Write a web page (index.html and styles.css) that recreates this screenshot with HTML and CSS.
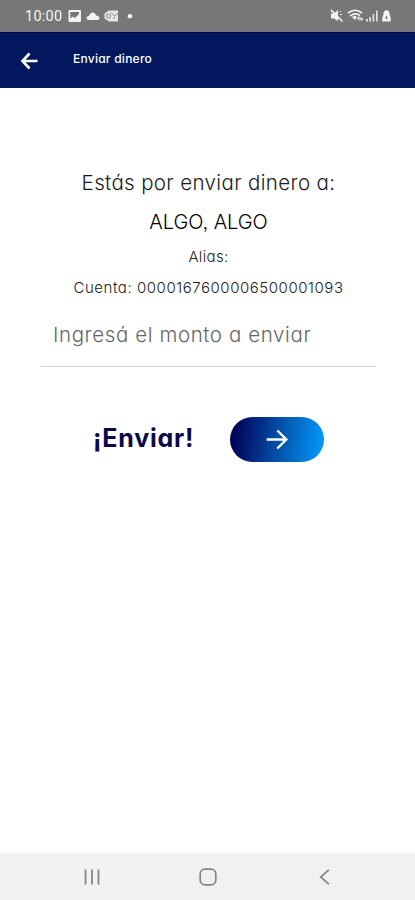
FILE: index.html
```html
<!DOCTYPE html>
<html lang="es">
<head>
<meta charset="utf-8">
<meta name="viewport" content="width=device-width, initial-scale=1">
<title>Enviar dinero</title>
<link rel="stylesheet" href="styles.css">
</head>
<body>
<div class="phone">
  <div class="status">
    <span class="clock">10:00</span>
    <svg class="notices" width="70" height="14" viewBox="0 0 70 14" fill="#f2f2f2">
      <path fill-rule="evenodd" d="M2.500 1H13Q14 1 14 2V12Q14 13 13 13H2.500Q1.500 13 1.500 12V2Q1.500 1 2.500 1ZM3.300 3V9.500L6 7.500L8 9L12 5V3Z"/>
      <path d="M22 11Q19.500 11 19.500 9Q19.500 7.200 22 7Q23.500 3 26.500 3.500Q28.500 4 29 6.500Q32.500 7 32.500 9.300Q32.500 11 30.500 11Z"/>
      <path d="M42 1.500H51V12.500H42L37.500 9.500V4.500Z" opacity=".9"/>
      <circle cx="41.500" cy="7" r="2" fill="none" stroke="#858585"/>
      <path d="M44 3.500L47.500 7L51 4.500M46 10L48 8" fill="none" stroke="#858585"/>
      <circle cx="63" cy="7.200" r="2.300"/>
    </svg>
    <svg class="signals" width="64" height="16" viewBox="0 0 64 16" fill="#f2f2f2">
      <path d="M2 5.500H5L9 2V13L5 10.500H2Z"/>
      <path d="M2 2L13.500 13.500" fill="none" stroke="#f2f2f2" stroke-width="1.700"/>
      <path d="M10.500 4L12 3M11 6.500H13"  stroke="#f2f2f2"/>
      <path d="M19 5Q26 -.5 33 5M21 8Q26 4 31 7.500" fill="none" stroke="#f2f2f2" stroke-width="1.600"/>
      <path d="M23 9Q25.500 7 28 9L26 12ZM28 10L30.500 8V13ZM31 9L34.500 11L32 13Z"/>
      <path d="M37 11H39V13.500H37ZM40.300 9H42V13.500H40.300ZM43.600 6H45.200V13.500H43.600ZM47 2.500H48.700V13.500H47Z" opacity=".85"/>
      <path fill-rule="evenodd" d="M55.500 3H56.500V2H58.500V3H59.500Q61 4 60.500 7Q62 8 61.800 13.500H53.200Q53 8 54.500 7Q54 4 55.500 3ZM57 8V9.500H56L57.500 11.500L59 9.500H58V8Z"/>
    </svg>
  </div>
  <header class="appbar">
    <svg width="18" height="18" viewBox="0 0 18 18" fill="none" stroke="#fff" stroke-width="2.600"><path d="M17.500 9H3M9.500 1.500L2.500 9L9.500 16.500"/></svg>
    <h1>Enviar dinero</h1>
  </header>
  <main class="content">
    <p class="lead">Estás por enviar dinero a:</p>
    <p class="name">ALGO, ALGO</p>
    <p class="alias">Alias:</p>
    <p class="account">Cuenta: 0000167600006500001093</p>
    <div class="amount"><span>Ingresá el monto a enviar</span></div>
    <div class="action">
      <span class="label">¡Enviar!</span>
      <button class="send" aria-label="Enviar">
        <svg width="22" height="22" viewBox="0 0 22 22" fill="none" stroke="#fff" stroke-width="2.400"><path d="M.7 10.500H20M11.300 1.500L20.300 10.500L11.300 19.500"/></svg>
      </button>
    </div>
  </main>
  <nav class="navbar">
    <svg width="18" height="18" viewBox="0 0 18 18" stroke="#858585" stroke-width="1.800"><path d="M2.500 1.500V16.500M9 1.500V16.500M15.500 1.500V16.500"/></svg>
    <svg width="18" height="18" viewBox="0 0 18 18" fill="none" stroke="#858585" stroke-width="1.700"><rect x="1.200" y="1.200" width="15.600" height="15.600" rx="4.800"/></svg>
    <svg width="18" height="18" viewBox="0 0 18 18" fill="none" stroke="#858585" stroke-width="1.700"><path d="M13.800 1.800L5.700 9L13.800 16.200"/></svg>
  </nav>
</div>
</body>
</html>
```
FILE: styles.css
```css
* { box-sizing: border-box; }
body {
  margin: 0;
  background: #fff;
  font-family: Inter, "Open Sans", sans-serif;
  font-feature-settings: "cv11", "ss03";
}
p, h1 { margin: 0; white-space: nowrap; }
svg { display: block; flex: none; }
.phone { display: flex; flex-direction: column; height: 900px; }
.status {
  display: flex;
  align-items: center;
  height: 32px;
  padding: 0 22px 0 25px;
  background: #777;
}
.clock {
  width: 42px;
  padding-top: 1px;
  font: 14.5px/32px Roboto, sans-serif;
  letter-spacing: .25px;
  color: #f5f5f5;
}
.signals { margin-left: auto; }
.appbar {
  display: flex;
  align-items: center;
  height: 56px;
  padding: 1px 20px 0;
  background: #02175e;
  border-top: 1px solid #020052;
  color: #fff;
}
.appbar h1 {
  margin: -5px 0 0 35px;
  font-size: 12px;
  line-height: 20px;
  font-weight: 500;
  letter-spacing: .25px;
}
.content {
  flex: 1;
  display: flex;
  flex-direction: column;
  align-items: center;
  padding: 79px 39px 0 41px;
}
.lead { font-size: 20.5px; line-height: 32px; font-weight: 300; color: #1a1a1a; letter-spacing: .36px; }
.name { margin-top: 7px; font-size: 20px; line-height: 32px; font-weight: 300; color: #000; letter-spacing: -.05px; }
.alias { margin-top: 7px; font-size: 15px; line-height: 24px; font-weight: 300; color: #222; letter-spacing: .35px; }
.account { margin-top: 7px; font-size: 15px; line-height: 24px; font-weight: 300; color: #222; letter-spacing: .55px; }
.amount {
  align-self: stretch;
  height: 67px;
  padding: 19px 0 0 12px;
  border-bottom: 1px solid #d4d4d4;
  font-size: 20.5px;
  line-height: 32px;
  font-weight: 300;
  letter-spacing: .6px;
  color: #666;
  white-space: nowrap;
}
.action {
  align-self: stretch;
  display: flex;
  align-items: center;
  margin-top: 50px;
  padding-left: 52px;
}
.label {
  width: 137px;
  margin-top: -4px;
  font-size: 25px;
  line-height: 36px;
  font-weight: 700;
  letter-spacing: .8px;
  color: #0b0847;
}
.send {
  display: grid;
  place-items: center;
  width: 94px;
  height: 45px;
  padding: 0;
  border: 0;
  border-radius: 23px;
  background: linear-gradient(97deg, #02065b 8%, #0256ae 55%, #0295f5 95%);
}
.navbar {
  display: flex;
  justify-content: space-between;
  align-items: center;
  height: 47px;
  padding: 0 82px 0 83px;
  background: #f1f1f1;
}
```
